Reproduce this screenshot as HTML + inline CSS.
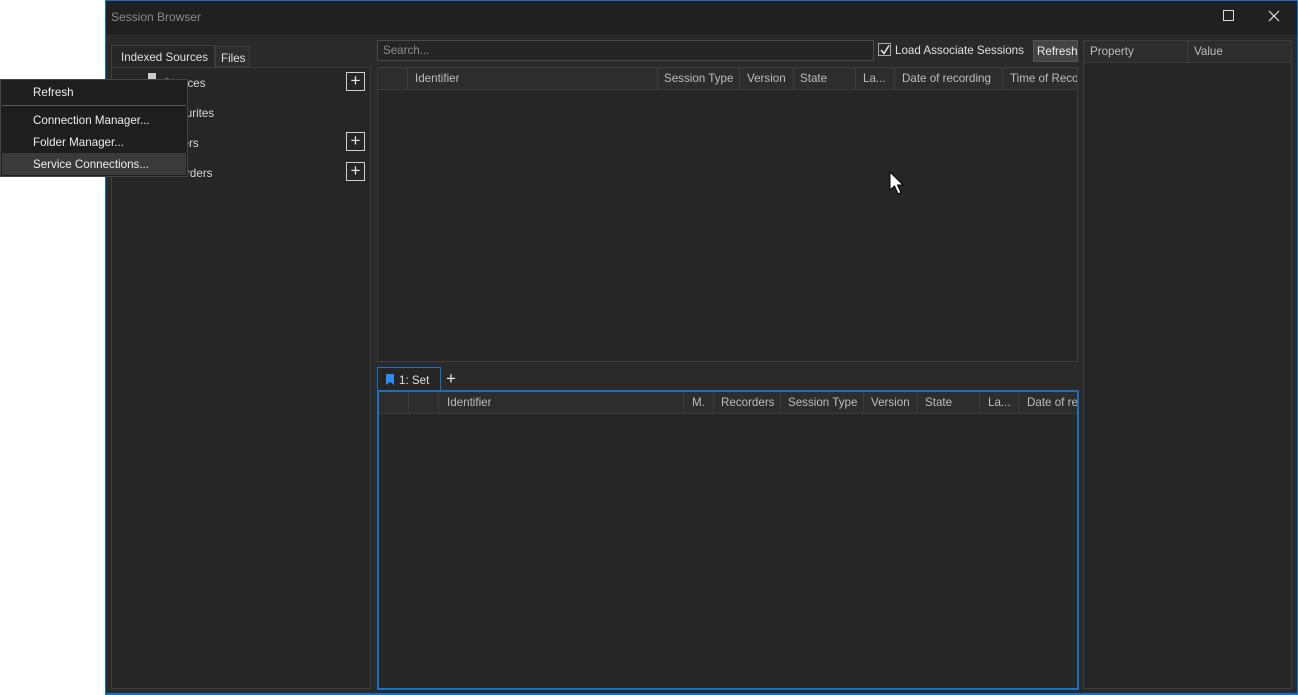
<!DOCTYPE html><html><head><style>
*{box-sizing:border-box;margin:0;padding:0}
body{width:1298px;height:695px;background:#fff;position:relative;overflow:hidden;font-family:"Liberation Sans",sans-serif;font-size:11.6px;color:#d8d8d8}
.a{position:absolute}
.win{left:105px;top:0;width:1193px;height:695px;background:#2a2a2a;border:1px solid #1a6fc0;border-bottom:2px solid #1a6fc0}
.hdr{background:#2d2d2d;border-bottom:1px solid #3c3c3c;height:22px;color:#bdbdbd}
.hdr span{position:absolute;top:4px;white-space:nowrap;overflow:hidden}
.col{position:absolute;top:0;height:21px;border-right:1px solid #3c3c3c}
.plus{width:19px;height:19px;border:1px solid #cfcfcf;color:#eee;font-size:17px;line-height:16px;text-align:center}
</style></head><body>
<div class="a win"></div>
<div class="a" style="left:106px;top:1px;width:1191px;height:33px;background:#202020"></div>
<div class="a" style="left:111px;top:10px;color:#8a8a8a;font-size:12px">Session Browser</div>
<div class="a" style="left:1223px;top:10px;width:11px;height:11px;border:1px solid #ddd"></div>
<svg class="a" style="left:1268px;top:10px" width="12" height="12"><path d="M1 1L11 11M11 1L1 11" stroke="#ddd" stroke-width="1.2"/></svg>

<div class="a" style="left:111px;top:45px;width:104px;height:23px;background:#262626;border:1px solid #3c3c3c;border-bottom:none;padding:5px 0 0 9px;color:#e0e0e0">Indexed Sources</div>
<div class="a" style="left:215px;top:46px;width:35px;height:21px;background:#2e2e2e;border:1px solid #3c3c3c;padding:5px 0 0 5px;color:#e0e0e0">Files</div>
<div class="a" style="left:111px;top:67px;width:260px;height:622px;background:#262626;border:1px solid #3c3c3c"></div>
<div class="a" style="left:148px;top:73px;width:8px;height:7px;background:#ccc"></div>
<div class="a" style="left:163px;top:77px">Sources</div>
<div class="a" style="left:160px;top:107px">Favourites</div>
<div class="a" style="left:160px;top:137px">Folders</div>
<div class="a" style="left:159px;top:167px">Recorders</div>
<div class="a plus" style="left:346px;top:72px">+</div>
<div class="a plus" style="left:346px;top:132px">+</div>
<div class="a plus" style="left:346px;top:162px">+</div>

<div class="a" style="left:377px;top:40px;width:497px;height:21px;background:#252525;border:1px solid #4a4a4a;padding:3px 0 0 5px;color:#8c8c8c">Search...</div>
<div class="a" style="left:878px;top:43px;width:13px;height:13px;border:1px solid #aaa;background:#2a2a2a"></div>
<svg class="a" style="left:879px;top:44px" width="12" height="12"><path d="M2 6L5 9.5L10 1.5" stroke="#eee" stroke-width="1.5" fill="none"/></svg>
<div class="a" style="left:895px;top:44px;color:#e0e0e0">Load Associate Sessions</div>
<div class="a" style="left:1033px;top:40px;width:45px;height:22px;background:#444;border:1px solid #555;padding:4px 0 0 3px;color:#eee;overflow:hidden;white-space:nowrap">Refresh</div>

<div class="a" style="left:377px;top:67px;width:701px;height:295px;background:#262626;border:1px solid #3c3c3c;overflow:hidden">
<div class="hdr a" style="left:0;top:0;width:700px">
<div class="col" style="left:0;width:30px"></div>
<div class="col" style="left:30px;width:250px"><span style="left:7px">Identifier</span></div>
<div class="col" style="left:280px;width:82px"><span style="left:6px">Session Type</span></div>
<div class="col" style="left:362px;width:54px"><span style="left:7px">Version</span></div>
<div class="col" style="left:416px;width:62px"><span style="left:6px">State</span></div>
<div class="col" style="left:478px;width:39px"><span style="left:7px">La...</span></div>
<div class="col" style="left:517px;width:108px"><span style="left:7px">Date of recording</span></div>
<div class="col" style="left:625px;width:80px"><span style="left:7px">Time of Reco</span></div>
</div></div>

<svg class="a" style="left:889px;top:171px" width="18" height="26"><path d="M1 1L1 19L5.5 15L9 23L12 21.5L8.5 14L14 14Z" fill="#fff" stroke="#000" stroke-width="1"/></svg>

<div class="a" style="left:377px;top:367px;width:64px;height:25px;background:#262626;border:1px solid #1a6fc0;border-bottom:none"></div>
<svg class="a" style="left:386px;top:374px" width="8" height="11"><path d="M0 0H8V11L4 8L0 11Z" fill="#2a8cf0"/></svg>
<div class="a" style="left:399px;top:374px;color:#e0e0e0">1: Set</div>
<div class="a" style="left:446px;top:369px;color:#eee;font-size:17px">+</div>
<div class="a" style="left:377px;top:390px;width:702px;height:300px;background:#262626;border:2px solid #1a6fc0;overflow:hidden">
<div class="hdr a" style="left:0;top:0;width:700px">
<div class="col" style="left:0;width:30px"></div>
<div class="col" style="left:30px;width:30px"></div>
<div class="col" style="left:60px;width:245px"><span style="left:8px">Identifier</span></div>
<div class="col" style="left:305px;width:30px"><span style="left:8px">M.</span></div>
<div class="col" style="left:335px;width:67px"><span style="left:7px">Recorders</span></div>
<div class="col" style="left:402px;width:83px"><span style="left:7px">Session Type</span></div>
<div class="col" style="left:485px;width:54px"><span style="left:7px">Version</span></div>
<div class="col" style="left:539px;width:62px"><span style="left:7px">State</span></div>
<div class="col" style="left:601px;width:39px"><span style="left:8px">La...</span></div>
<div class="col" style="left:640px;width:70px"><span style="left:8px">Date of re</span></div>
</div></div>

<div class="a" style="left:1083px;top:40px;width:209px;height:649px;background:#262626;border:1px solid #3c3c3c">
<div class="hdr a" style="left:0;top:0;width:207px">
<div class="col" style="left:0;width:104px"><span style="left:6px">Property</span></div>
<div class="col" style="left:104px;width:104px;border:none"><span style="left:6px">Value</span></div>
</div></div>

<div class="a" style="left:0;top:79px;width:188px;height:98px;background:#1e1e1e;border:1px solid #444"></div>
<div class="a" style="left:33px;top:86px;color:#eee">Refresh</div>
<div class="a" style="left:2px;top:105px;width:184px;height:1px;background:#5a5a5a"></div>
<div class="a" style="left:33px;top:114px;color:#eee">Connection Manager...</div>
<div class="a" style="left:33px;top:136px;color:#eee">Folder Manager...</div>
<div class="a" style="left:2px;top:153px;width:184px;height:22px;background:#3a3a3a"></div>
<div class="a" style="left:33px;top:158px;color:#eee">Service Connections...</div>
</body></html>
